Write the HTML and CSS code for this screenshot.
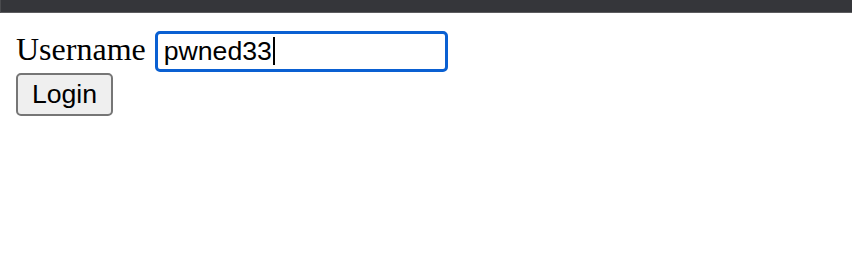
FILE: index.html
```html
<!DOCTYPE html>
<html>
<head>
<meta charset="utf-8">
<link rel="stylesheet" href="styles.css">
</head>
<body>
<div class="topbar"></div>
<div class="page">
  <div class="row">
    <label class="label">Username</label>
    <div class="field"><span class="value">pwned33</span><span class="caret"></span></div>
  </div>
  <button class="btn">Login</button>
</div>
</body>
</html>
```

FILE: styles.css
```css
html, body {
  margin: 0;
  padding: 0;
  background: #ffffff;
}
.topbar {
  height: 12px;
  background: #35363a;
  border-bottom: 1px solid #5c5c5f;
  border-left: 1px solid #4a4b4e;
}
.page {
  padding: 16px;
}
.row {
  display: flex;
  align-items: center;
  height: 44px;
}
.label {
  font-family: "Liberation Serif", serif;
  font-size: 32px;
  color: #000;
  margin-right: 9px;
  position: relative;
  top: -2px;
}
.field {
  box-sizing: border-box;
  width: 293px;
  height: 41px;
  border: 3px solid #0a60d2;
  border-radius: 5px;
  padding: 0 6px;
  display: flex;
  align-items: center;
  font-family: "Liberation Sans", sans-serif;
  font-size: 26.67px;
  color: #000;
}
.caret {
  display: inline-block;
  width: 2px;
  height: 28px;
  background: #000;
  margin-left: 1px;
}
.btn {
  box-sizing: border-box;
  width: 97px;
  height: 43px;
  margin: 0;
  padding: 0;
  border: 2px solid #767676;
  border-radius: 5px;
  background: #efefef;
  font-family: "Liberation Sans", sans-serif;
  font-size: 26.67px;
  color: #000;
  display: block;
}
```
